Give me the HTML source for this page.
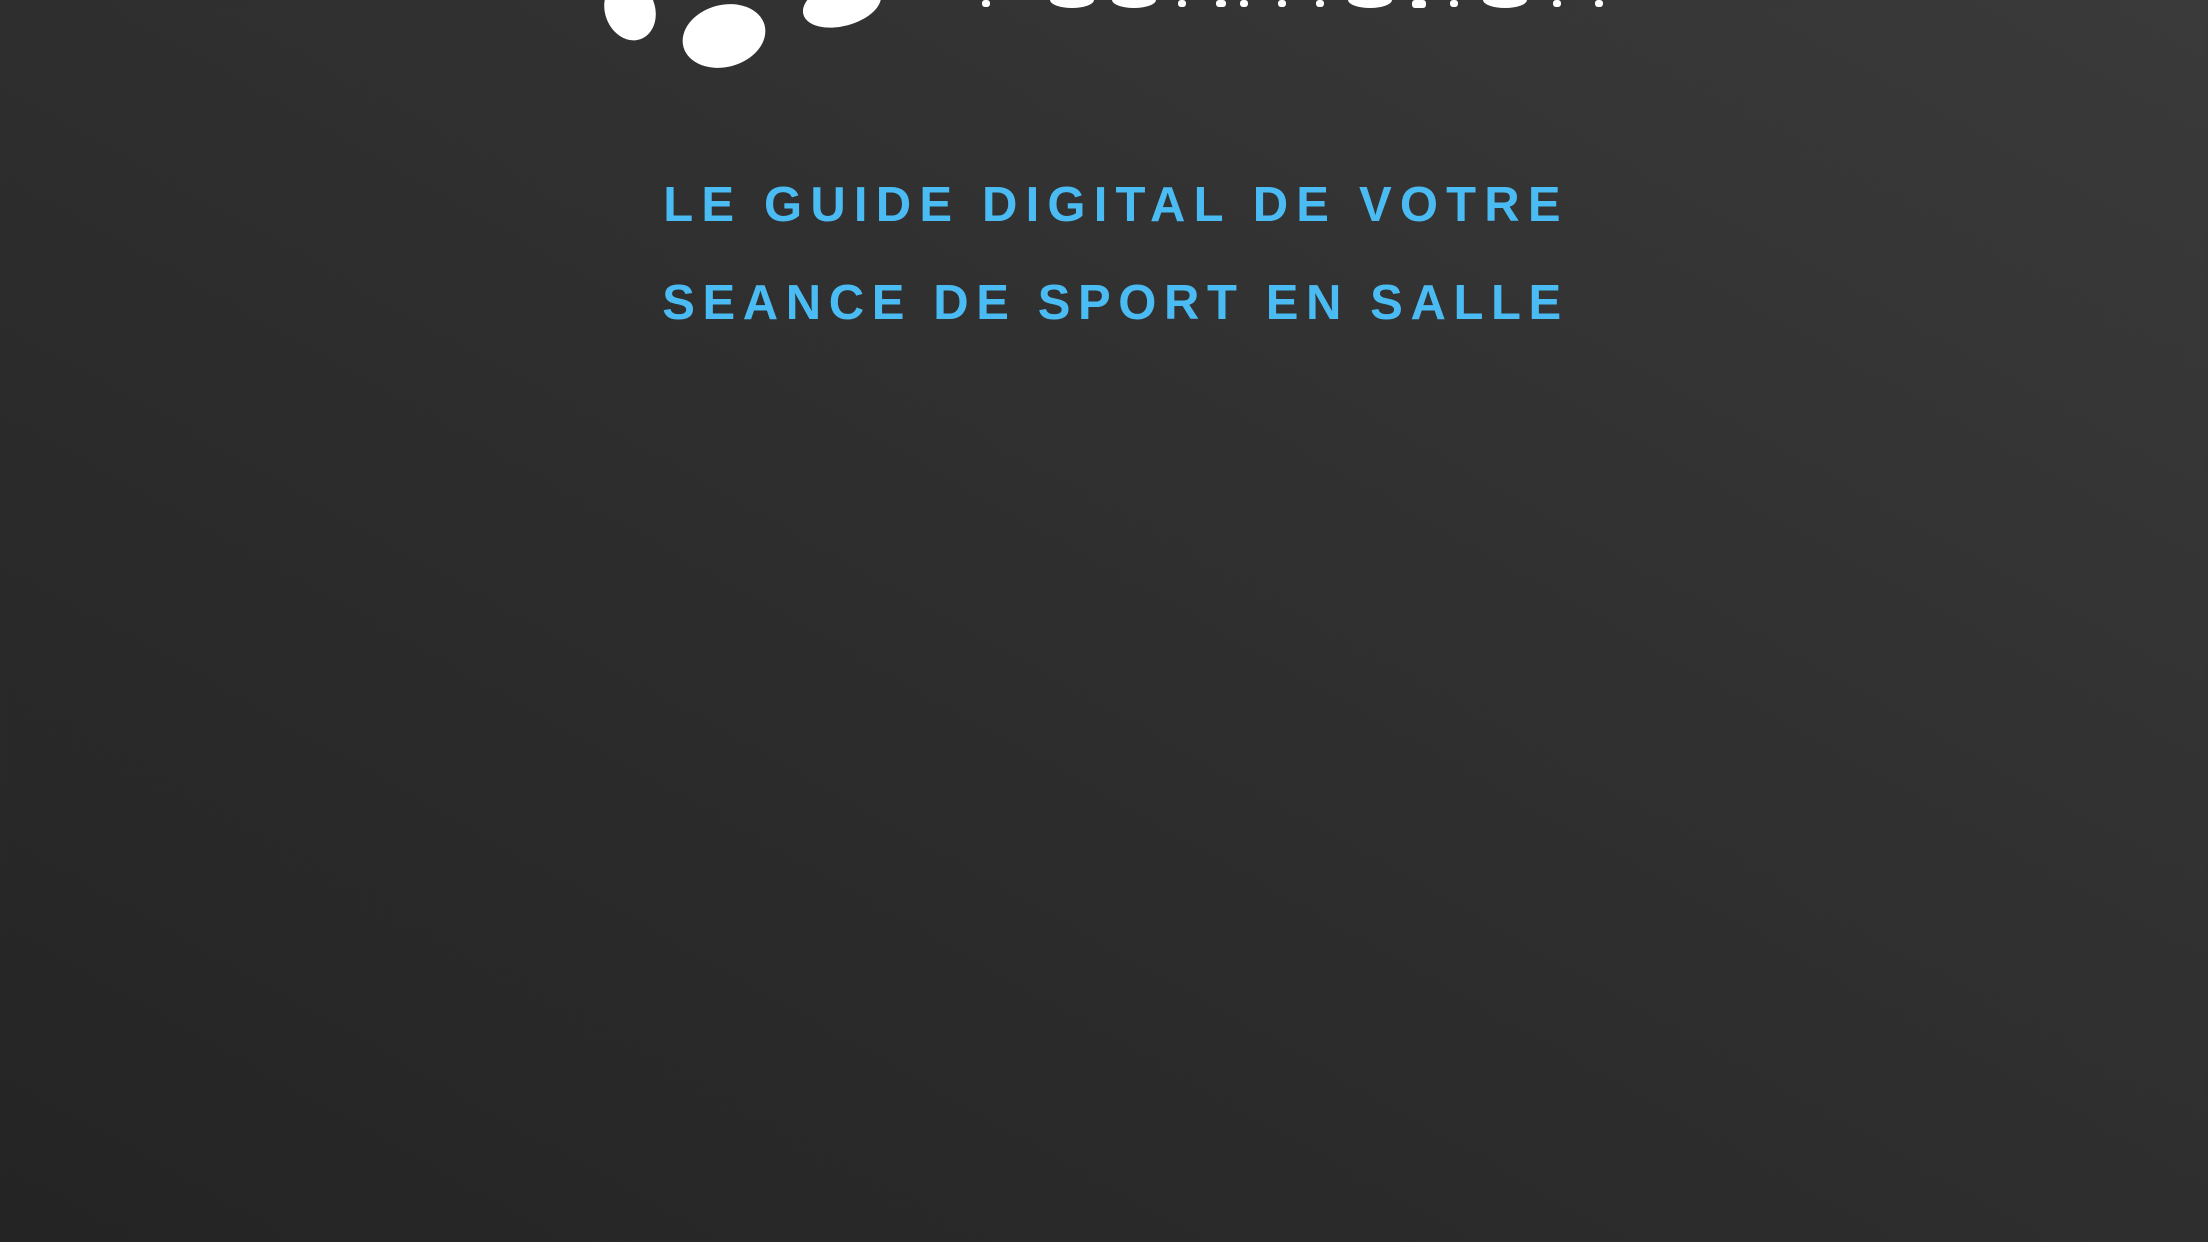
<!DOCTYPE html>
<html><head><style>
html,body{margin:0;padding:0}
body{width:2208px;height:1242px;overflow:hidden;background:linear-gradient(to top right,#242424 0%,#2e2e2e 50%,#3a3a3a 100%);position:relative;font-family:"Liberation Sans",sans-serif}
.t{position:absolute;left:8px;width:2208px;text-align:center;color:#4bbcf3;font-size:49px;font-weight:600}
</style></head><body>
<svg width="2208" height="80" style="position:absolute;left:0;top:0">
<ellipse cx="630" cy="10" rx="25" ry="31" transform="rotate(-20 630 10)" fill="#fff"/>
<ellipse cx="724" cy="36" rx="42" ry="31" transform="rotate(-15 724 36)" fill="#fff"/>
<ellipse cx="842" cy="4" rx="40" ry="22" transform="rotate(-15 842 4)" fill="#fff"/>
<g fill="#fff">
<rect x="982" y="0" width="8" height="7" rx="3"/>
<ellipse cx="1072" cy="0" rx="22" ry="8"/>
<ellipse cx="1134" cy="0" rx="22" ry="8"/>
<rect x="1178" y="0" width="8" height="7" rx="3"/>
<rect x="1216" y="0" width="10" height="7" rx="3"/>
<rect x="1240" y="0" width="8" height="7" rx="3"/>
<rect x="1278" y="0" width="8" height="7" rx="3"/>
<rect x="1316" y="0" width="8" height="7" rx="3"/>
<ellipse cx="1370" cy="0" rx="22" ry="8"/>
<rect x="1412" y="0" width="14" height="8" rx="3"/>
<rect x="1450" y="0" width="8" height="7" rx="3"/>
<ellipse cx="1505" cy="0" rx="22" ry="8"/>
<rect x="1553" y="0" width="8" height="7" rx="3"/>
<rect x="1595" y="0" width="8" height="7" rx="3"/>
</g>
</svg>
<div class="t" style="top:177px;letter-spacing:8.2px;text-indent:8px">LE GUIDE DIGITAL DE VOTRE</div>
<div class="t" style="top:275px;letter-spacing:7.6px;text-indent:7px">SEANCE DE SPORT EN SALLE</div>
</body></html>
